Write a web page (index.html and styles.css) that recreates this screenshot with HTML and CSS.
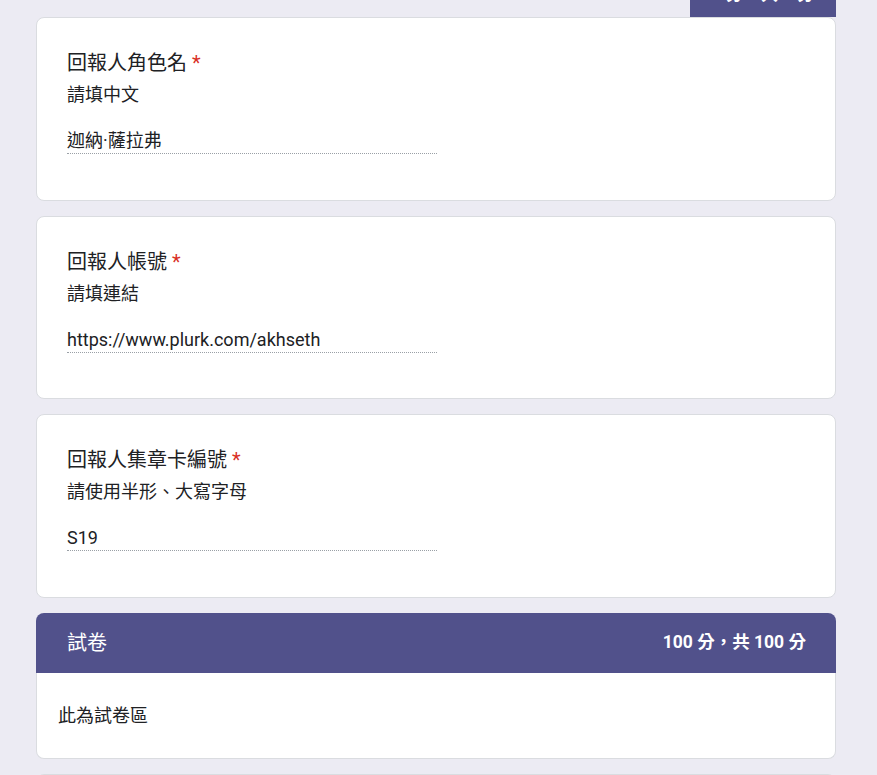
FILE: index.html
```html
<!DOCTYPE html>
<html lang="zh-Hant">
<head>
<meta charset="utf-8">
<title>表單</title>
<link rel="stylesheet" href="styles.css">
</head>
<body>
<div class="page">
  <div class="tab-row"><div class="score-tab">0 分，共 0 分</div></div>

  <div class="card">
    <div class="q-title">回報人角色名<span class="req"> *</span></div>
    <div class="q-desc">請填中文</div>
    <div class="q-answer">迦納·薩拉弗</div>
  </div>

  <div class="card">
    <div class="q-title">回報人帳號<span class="req"> *</span></div>
    <div class="q-desc">請填連結</div>
    <div class="q-answer">https://www.plurk.com/akhseth</div>
  </div>

  <div class="card">
    <div class="q-title">回報人集章卡編號<span class="req"> *</span></div>
    <div class="q-desc">請使用半形、大寫字母</div>
    <div class="q-answer">S19</div>
  </div>

  <div class="section">
    <div class="section-head">
      <div class="section-title">試卷</div>
      <div class="section-score">100 分，共 100 分</div>
    </div>
    <div class="section-body">此為試卷區</div>
  </div>

  <div class="card card-next"></div>
</div>
</body>
</html>
```

FILE: styles.css
```css
html, body {
  margin: 0;
  padding: 0;
  background: #ecebf3;
  overflow: hidden;
}

body {
  font-family: Roboto, "Noto Sans CJK TC", sans-serif;
  color: #202124;
}

.page {
  width: 800px;
  margin: -23px 0 0 36px;
  display: flex;
  flex-direction: column;
  gap: 15px;
}

.tab-row {
  display: flex;
  justify-content: flex-end;
  margin-bottom: -15px;
}

.score-tab {
  width: 146px;
  height: 40px;
  box-sizing: border-box;
  padding-top: 5px;
  background: #51518b;
  color: #fff;
  font-weight: 700;
  font-size: 17.5px;
  line-height: 25px;
  text-align: center;
}

.card {
  background: #fff;
  border: 1px solid #dadce0;
  border-radius: 8px;
  padding: 30px 30px 45px;
  box-sizing: border-box;
  height: 183.6px;
}

.q-title {
  font-size: 20px;
  line-height: 30px;
}

.req {
  color: #d93025;
}

.q-desc {
  margin-top: 4px;
  font-size: 18px;
  line-height: 25px;
}

.q-answer {
  margin-top: 21px;
  width: 370px;
  font-size: 18px;
  line-height: 25px;
  border-bottom: 1px dotted #9aa0a6;
}

.section {
  display: flex;
  flex-direction: column;
}

.section-head {
  height: 60px;
  background: #51518b;
  border-radius: 8px 8px 0 0;
  color: #fff;
  display: flex;
  align-items: center;
  justify-content: space-between;
  padding: 0 30px 0 31px;
}

.section-title {
  font-size: 20px;
  line-height: 30px;
}

.section-score {
  font-size: 17.5px;
  font-weight: 700;
  line-height: 25px;
}

.section-body {
  background: #fff;
  border: 1px solid #dadce0;
  border-top: 0;
  border-radius: 0 0 8px 8px;
  padding: 30px 21px 30px;
  font-size: 18px;
  line-height: 25px;
}

.card-next {
  height: 60px;
}
```
